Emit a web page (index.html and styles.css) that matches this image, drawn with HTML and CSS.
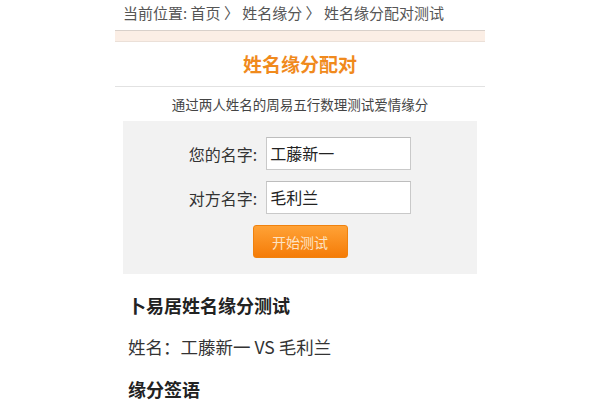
FILE: index.html
```html
<!DOCTYPE html>
<html lang="zh-CN">
<head>
<meta charset="utf-8">
<title>姓名缘分配对</title>
<link rel="stylesheet" href="styles.css">
</head>
<body>
<div class="page">
  <div class="crumb">当前位置: 首页 〉 姓名缘分 〉 姓名缘分配对测试</div>
  <div class="band"></div>
  <h1 class="title">姓名缘分配对</h1>
  <p class="sub">通过两人姓名的周易五行数理测试爱情缘分</p>
  <div class="form">
    <div class="row">
      <span class="label">您的名字:</span>
      <div class="input">工藤新一</div>
    </div>
    <div class="row">
      <span class="label">对方名字:</span>
      <div class="input">毛利兰</div>
    </div>
    <div class="row">
      <button class="btn">开始测试</button>
    </div>
  </div>
  <div class="result">
    <div class="rh">卜易居姓名缘分测试</div>
    <div class="rl">姓名：工藤新一 VS 毛利兰</div>
    <div class="rh">缘分签语</div>
  </div>
</div>
</body>
</html>
```
FILE: styles.css
```css
html, body {
  margin: 0;
  padding: 0;
  background: #ffffff;
}
body {
  font-family: "Noto Sans CJK SC", "Noto Sans", sans-serif;
  color: #333;
  overflow: hidden;
}
.page {
  width: 370px;
  margin: 0 auto;
}
.crumb {
  height: 26px;
  line-height: 26px;
  padding-left: 8px;
  font-size: 15px;
  color: #555;
  white-space: nowrap;
}
.band {
  margin-top: 4px;
  height: 10px;
  background: #fbeee5;
  border-top: 1px solid #d8d0ca;
  border-bottom: 1px solid #ebe0d8;
}
.title {
  margin: 0;
  height: 44px;
  line-height: 44px;
  text-align: center;
  font-size: 19px;
  font-weight: bold;
  color: #f08a1d;
  border-bottom: 1px solid #e2e2e2;
}
.sub {
  margin: 0;
  height: 34px;
  line-height: 34px;
  text-align: center;
  font-size: 13.5px;
  color: #444;
}
.form {
  margin: 0 8px;
  background: #f2f2f2;
  padding: 16px 0;
  display: flex;
  flex-direction: column;
  gap: 11px;
}
.row {
  display: flex;
  justify-content: center;
  align-items: center;
  gap: 9px;
}
.label {
  font-size: 16px;
  color: #333;
}
.input {
  width: 140px;
  height: 31px;
  line-height: 31px;
  padding-left: 3px;
  background: #fff;
  border: 1px solid #c9c9c9;
  border-top-color: #bdbdbd;
  font-size: 16px;
  color: #222;
}
.btn {
  width: 95px;
  height: 33px;
  border: 1px solid #f0820e;
  border-radius: 3px;
  background: linear-gradient(#ffa236, #f57c08);
  color: #fde3c4;
  font-family: "Noto Sans CJK SC", sans-serif;
  font-size: 14px;
  padding: 0;
}
.result {
  margin-top: 10px;
  padding-left: 13px;
}
.rh {
  line-height: 42px;
  font-size: 18px;
  font-weight: bold;
  color: #222;
}
.rl {
  line-height: 42px;
  font-size: 17.5px;
  color: #333;
}
```
